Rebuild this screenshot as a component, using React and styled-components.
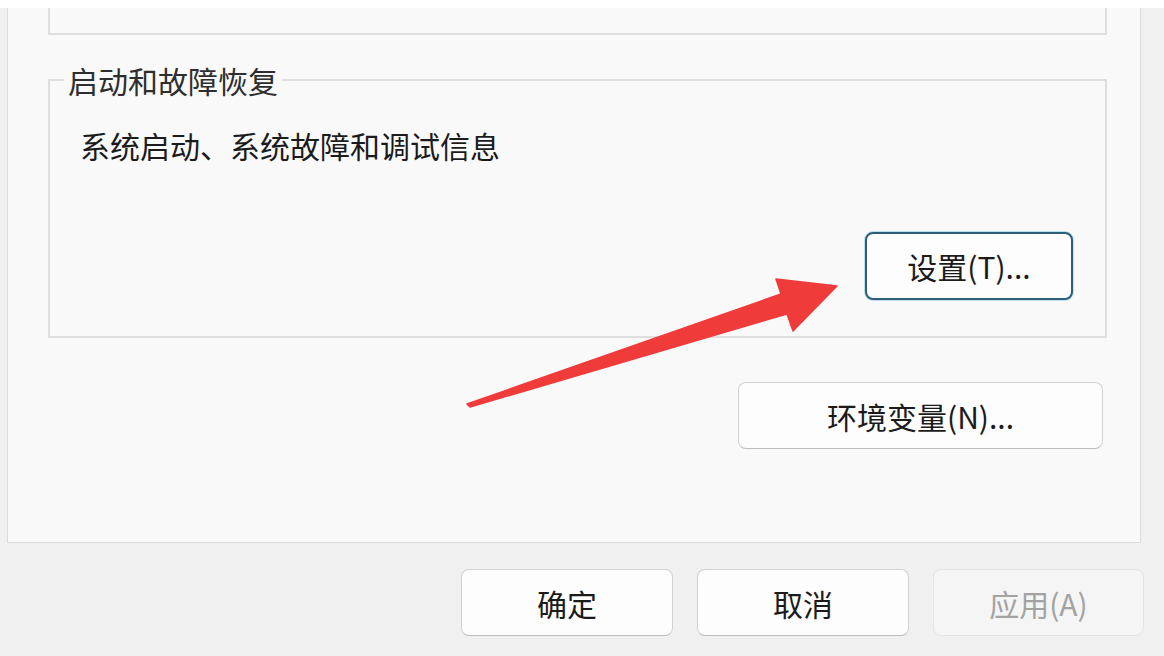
import React from "react";
import styled, { createGlobalStyle, css } from "styled-components";

const Global = createGlobalStyle`
  html, body { margin: 0; padding: 0; background: #f0f0f0; }
  * { box-sizing: border-box; }
`;

const FONT = `"Noto Sans CJK SC", "Noto Sans", "Liberation Sans", sans-serif`;

const Window = styled.div`
  position: relative;
  width: 1164px;
  height: 656px;
  overflow: hidden;
  background: #f0f0f0;
  font-family: ${FONT};
  color: #1b1b1b;
  display: flex;
  flex-direction: column;
`;

const TopStrip = styled.div`
  height: 8px;
  background: #ffffff;
  flex: none;
`;

const TabPage = styled.div`
  margin-left: 7px;
  width: 1134px;
  height: 535px;
  flex: none;
  background: #f9f9f9;
  border: 1px solid #dcdcdc;
  border-top: none;
  padding: 0 33px 0 40px;
  display: flex;
  flex-direction: column;
`;

const PrevGroup = styled.div`
  height: 27px;
  border: 2px solid #dedede;
  border-top: none;
  flex: none;
`;

const Group = styled.fieldset`
  margin: 28px 0 0;
  padding: 0 0 36px;
  border: 2px solid #dedede;
  min-width: 0;
`;

const Legend = styled.legend`
  margin-left: 14px;
  padding: 0 4px;
  font-size: 30px;
  line-height: 34px;
  color: #2e2e2e;
`;

const Description = styled.div`
  margin: 28px 0 0 30px;
  font-size: 30px;
  line-height: 40px;
  color: #1b1b1b;
`;

const Row = styled.div`
  display: flex;
  justify-content: flex-end;
  margin-top: ${(p) => p.$top}px;
  padding-right: ${(p) => p.$right}px;
  gap: ${(p) => p.$gap || 0}px;
`;

const Button = styled.button`
  width: ${(p) => p.$w}px;
  height: ${(p) => p.$h}px;
  font-family: ${FONT};
  font-size: 30px;
  line-height: 1;
  color: #1b1b1b;
  background: #fdfdfd;
  border: 1px solid #d2d2d2;
  border-bottom-color: #bdbdbd;
  border-radius: 8px;
  padding: 0;
  display: flex;
  align-items: center;
  justify-content: center;
  ${(p) =>
    p.$focused &&
    css`
      border: 2px solid #2f5f78;
      box-shadow: 0 0 0 1px #b9e0f2;
    `}
  ${(p) =>
    p.$disabled &&
    css`
      color: #a3a3a3;
      background: #f5f5f5;
      border-color: #e3e3e3;
    `}
`;

const Footer = styled.div`
  display: flex;
  justify-content: flex-end;
  gap: 24px;
  padding: 26px 20px 0 0;
`;

const ArrowLayer = styled.svg`
  position: absolute;
  left: 0;
  top: 0;
  width: 1164px;
  height: 656px;
  pointer-events: none;
`;

export default function App() {
  return (
    <>
      <Global />
      <Window>
        <TopStrip />
        <TabPage>
          <PrevGroup />
          <Group>
            <Legend>启动和故障恢复</Legend>
            <Description>系统启动、系统故障和调试信息</Description>
            <Row $top={67} $right={32}>
              <Button $w={208} $h={68} $focused>设置(T)...</Button>
            </Row>
          </Group>
          <Row $top={44} $right={4}>
            <Button $w={365} $h={67}>环境变量(N)...</Button>
          </Row>
        </TabPage>
        <Footer>
          <Button $w={212} $h={67}>确定</Button>
          <Button $w={212} $h={67}>取消</Button>
          <Button $w={211} $h={67} $disabled>应用(A)</Button>
        </Footer>
        <ArrowLayer viewBox="0 0 1164 656">
          <polygon
            points="467,404 781,294 776,279 837,286 793,331 787,314 470,407"
            fill="#f03b3b"
            stroke="#f03b3b"
            strokeWidth="1.5"
            strokeLinejoin="round"
          />
        </ArrowLayer>
      </Window>
    </>
  );
}
